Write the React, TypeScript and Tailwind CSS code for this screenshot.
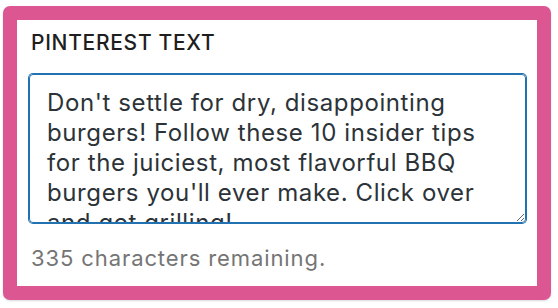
import React from "react";

export default function App() {
  const text =
    "Don't settle for dry, disappointing burgers! Follow these 10 insider tips for the juiciest, most flavorful BBQ burgers you'll ever make. Click over and get grilling!";
  return (
    <div className="w-[558px] h-[308px] bg-white pt-[6px] pl-[3px] font-['Inter',sans-serif]">
      <div className="w-[548px] h-[294px] border-[14px] border-[#dc5692] rounded-[7px] bg-white px-[12px] pt-[11px] shadow-[0_1px_2px_rgba(0,0,0,0.15)]">
        <label className="block pl-[2px] text-[21px] leading-[24px] font-medium tracking-[0.7px] text-[#1e1e1e]">
          PINTEREST TEXT
        </label>
        <textarea
          readOnly
          value={text}
          className="mt-[19px] block w-[497px] h-[149px] border border-[#2271b1] shadow-[0_0_0_1px_#2271b1] rounded-[4px] pl-[17px] pr-[30px] pt-[13px] text-[24px] leading-[30px] tracking-[0.6px] text-[#2c3338] overflow-hidden outline-none resize-y"
        />
        <p className="mt-[23px] pl-[2px] text-[22px] leading-[24px] tracking-[0.9px] text-[#757575]">
          335 characters remaining.
        </p>
      </div>
    </div>
  );
}
